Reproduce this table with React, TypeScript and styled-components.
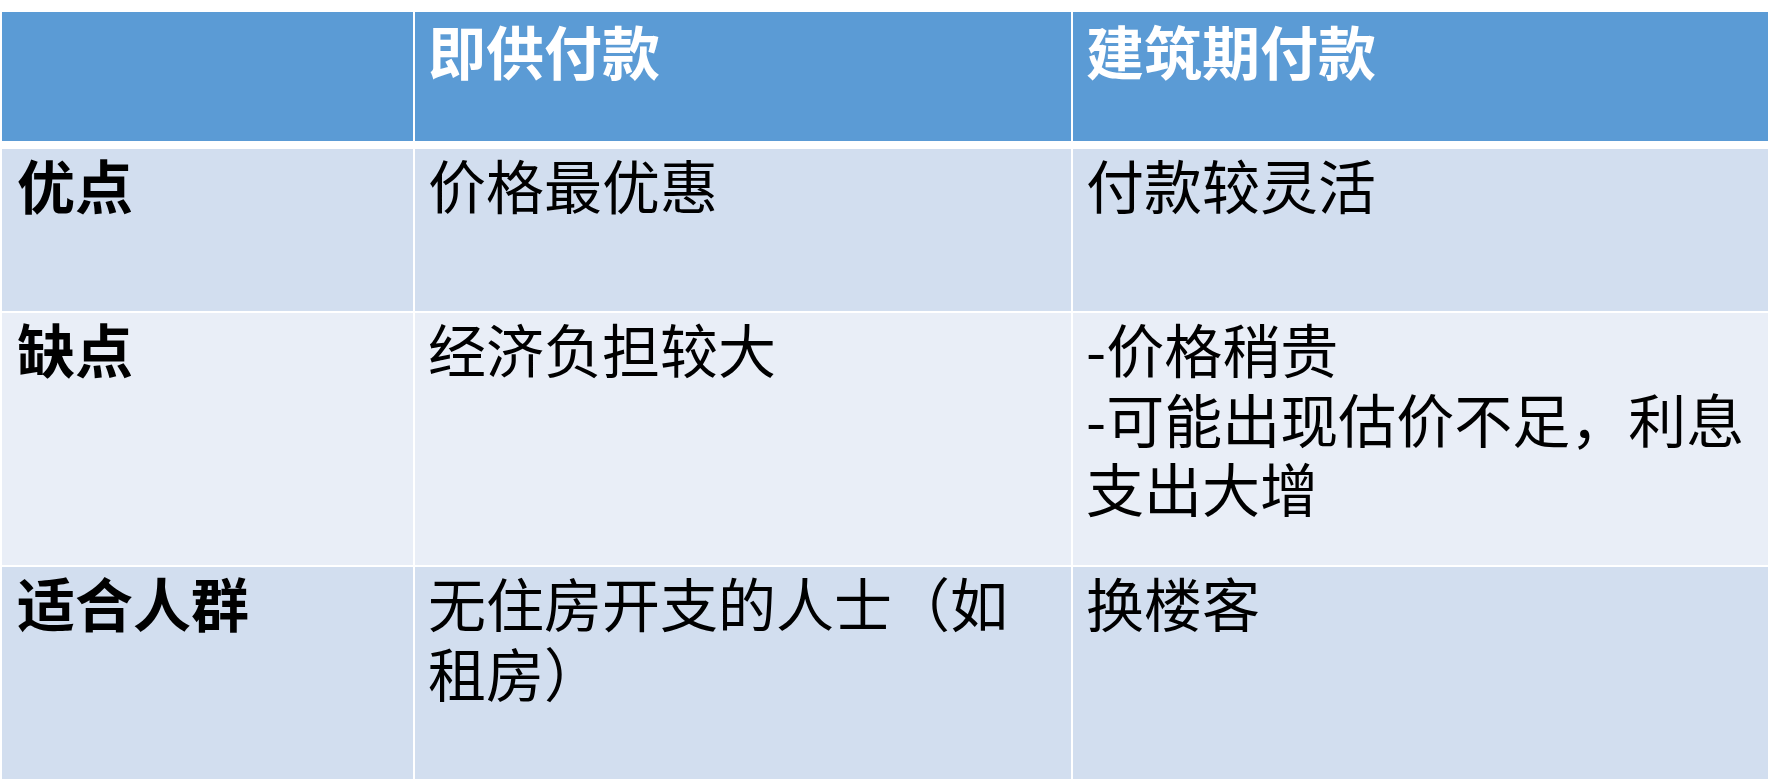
import React from "react";
import styled, { createGlobalStyle } from "styled-components";

const GlobalStyle = createGlobalStyle`
    html, body {
        margin: 0;
        padding: 0;
        background: #ffffff;
    }
    body {
        font-family: "Noto Sans CJK SC", "Noto Sans", sans-serif;
    }
`;

const Page = styled.div`
    width: 1773px;
    height: 782px;
    padding: 12px 5px 0 2px;
    box-sizing: border-box;
`;

const Table = styled.div`
    display: grid;
    grid-template-columns: 411px 656px 1fr;
    grid-template-rows: 135px 162px 252px 212px;
    gap: 2px;
    background: #ffffff;
`;

const HeadCell = styled.div`
    background: #5b9bd5;
    color: #ffffff;
    font-weight: 700;
    font-size: 58px;
    line-height: 1.2;
    padding: 4px 12px 0 13px;
    border-bottom: 6px solid #ffffff;
`;

const Cell = styled.div<{ $alt?: boolean; $label?: boolean }>`
    background: ${(p) => (p.$alt ? "#e9eef7" : "#d2deef")};
    color: #000000;
    font-weight: ${(p) => (p.$label ? 700 : 400)};
    font-size: 58px;
    line-height: 1.2;
    padding: 1px 6px 0 ${(p) => (p.$label ? "15px" : "13px")};
`;

const rows = [
    { label: "优点", a: "价格最优惠", b: <>付款较灵活</> },
    {
        label: "缺点",
        a: "经济负担较大",
        b: (
            <>
                -价格稍贵
                <br />
                -可能出现估价不足，利息支出大增
            </>
        ),
    },
    { label: "适合人群", a: "无住房开支的人士（如租房）", b: <>换楼客</> },
];

const App: React.FC = () => {
    return (
        <Page>
            <GlobalStyle />
            <Table>
                <HeadCell />
                <HeadCell>即供付款</HeadCell>
                <HeadCell>建筑期付款</HeadCell>

                {rows.map((r, i) => (
                    <React.Fragment key={r.label}>
                        <Cell $alt={i % 2 === 1} $label>
                            {r.label}
                        </Cell>
                        <Cell $alt={i % 2 === 1}>{r.a}</Cell>
                        <Cell $alt={i % 2 === 1}>{r.b}</Cell>
                    </React.Fragment>
                ))}
            </Table>
        </Page>
    );
};

export default App;
